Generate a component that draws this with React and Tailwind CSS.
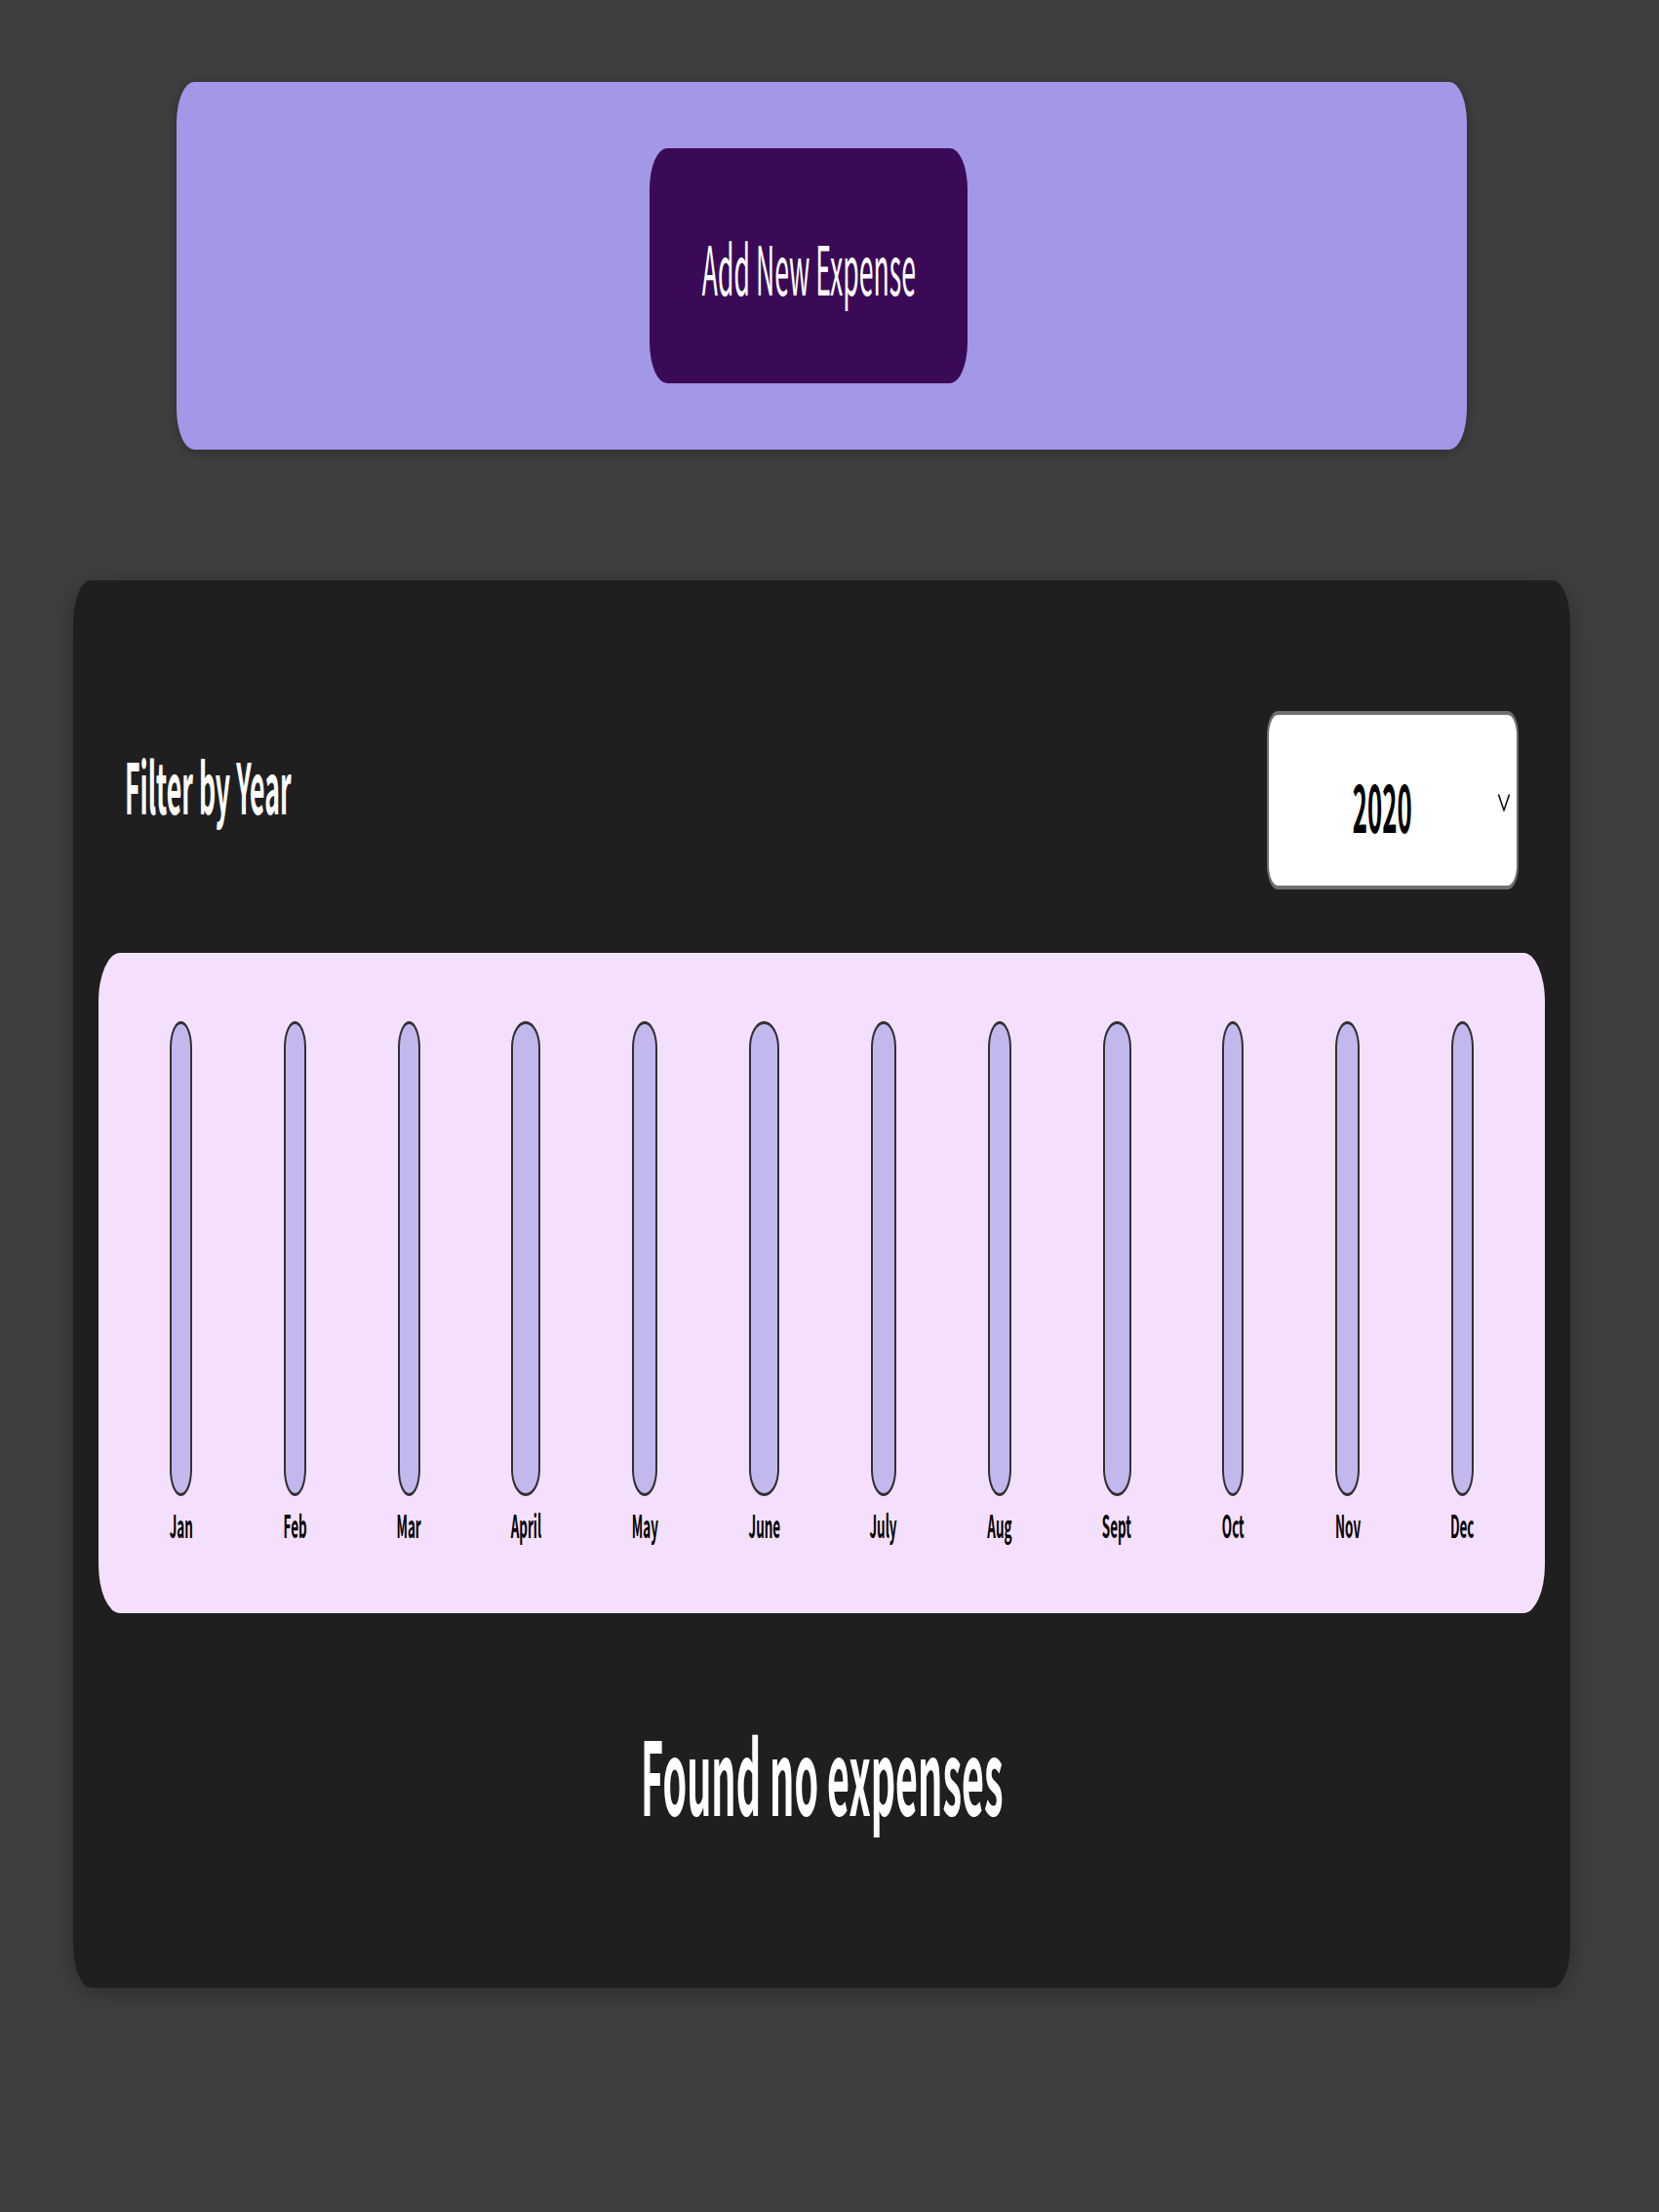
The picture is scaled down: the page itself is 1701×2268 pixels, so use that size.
const months = [
  { label: 'Jan', width: 23 },
  { label: 'Feb', width: 23 },
  { label: 'Mar', width: 23 },
  { label: 'April', width: 30 },
  { label: 'May', width: 26 },
  { label: 'June', width: 31 },
  { label: 'July', width: 26 },
  { label: 'Aug', width: 24 },
  { label: 'Sept', width: 29 },
  { label: 'Oct', width: 22 },
  { label: 'Nov', width: 25 },
  { label: 'Dec', width: 23 },
];

// the whole screenshot is squeezed sideways, so text is narrowed with scale-x
const Squeezed = ({ children, className = '' }) => (
  <span className={`inline-block whitespace-nowrap ${className}`}>{children}</span>
);

const ChartBar = ({ label, width }) => (
  <div className="flex flex-col items-center h-full" style={{ width }}>
    <div className="flex-1 w-full bg-[#c2b8ee] border-x-[2px] border-y-[3px] border-[#313131] rounded-[50%_/_27px]" />
    <div className="mt-[6px] flex justify-center w-full">
      <Squeezed className="scale-x-[0.42] text-[32px] leading-[46px] font-bold text-black">{label}</Squeezed>
    </div>
  </div>
);

const NewExpense = () => (
  <div className="w-[1323px] mx-auto bg-[#a397e8] rounded-[18px_/_42px] py-[68px] flex justify-center shadow-[0_2px_14px_rgba(0,0,0,0.3)]">
    <button className="w-[326px] h-[241px] mr-[27px] bg-[#3b0a57] rounded-[18px_/_42px] flex items-center justify-center text-white">
      <Squeezed className="scale-x-[0.38] text-[70px] leading-[101px] font-normal">Add New Expense</Squeezed>
    </button>
  </div>
);

const ExpensesFilter = () => (
  <div className="px-[27px] mt-[67px] flex items-center justify-between">
    <div className="mb-[34px] text-white">
      <Squeezed className="scale-x-[0.37] origin-left text-[72px] leading-[104px] font-bold">Filter by Year</Squeezed>
    </div>
    <div className="w-[258px] h-[183px] bg-white border-x-[2px] border-y-[4px] border-[#6f6f6f] rounded-[11px_/_25px] flex items-center pl-[86px] pr-[6px] pt-[8px]">
      <div className="w-[60px] flex justify-center">
        <Squeezed className="scale-x-[0.38] text-[68px] leading-[98px] font-bold text-black">2020</Squeezed>
      </div>
      <svg className="ml-auto mb-[4px]" width="14" height="20" viewBox="0 0 14 20" fill="none">
        <path d="M1.5 1.5 L7 18 L12.5 1.5" stroke="#111" strokeWidth="1.6" strokeLinejoin="round" />
      </svg>
    </div>
  </div>
);

const Chart = () => (
  <div className="mt-[65px] h-[677px] bg-[#f4e0fc] rounded-[22px_/_50px] px-[26px] pt-[70px] pb-[68px] flex justify-around">
    {months.map((m) => (
      <ChartBar key={m.label} label={m.label} width={m.width} />
    ))}
  </div>
);

export default function App() {
  return (
    <div className="min-h-screen bg-[#3f3f3f] pt-[84px] pb-[40px] font-['Noto_Sans_CJK_JP','Noto_Sans',sans-serif]">
      <div className="w-[1685px]">
        <NewExpense />
        <div className="w-[1535px] mx-auto mt-[134px] bg-[#1f1f1f] rounded-[18px_/_45px] px-[26px] pt-[67px] pb-[67px] shadow-[0_6px_28px_rgba(0,0,0,0.3)]">
          <ExpensesFilter />
          <Chart />
          <h2 className="mt-[88px] mb-[79px] flex justify-center text-white">
            <Squeezed className="scale-x-[0.38] text-[104px] leading-[150px] font-bold">Found no expenses</Squeezed>
          </h2>
        </div>
      </div>
    </div>
  );
}
